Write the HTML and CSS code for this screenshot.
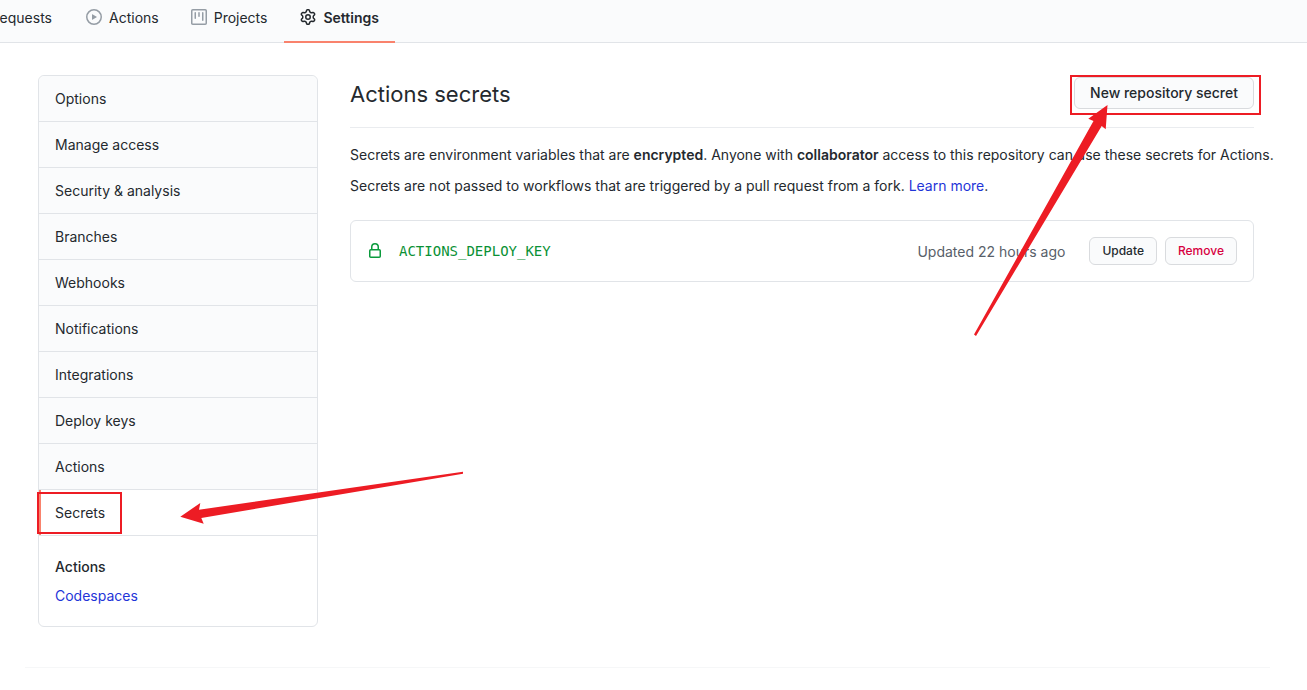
FILE: index.html
```html
<!DOCTYPE html>
<html lang="en">
<head>
<meta charset="utf-8">
<title>Actions secrets</title>
<link rel="stylesheet" href="styles.css">
</head>
<body>
<nav class="tabs" aria-label="Repository">
  <a class="tab tab-cut" href="#">requests</a>
  <a class="tab" href="#">
    <svg class="icon" viewBox="0 0 16 16" aria-hidden="true"><path fill-rule="evenodd" d="M1.5 8a6.5 6.5 0 1113 0 6.5 6.5 0 01-13 0zM8 0a8 8 0 100 16A8 8 0 008 0zM6.379 5.227A.25.25 0 006 5.442v5.117a.25.25 0 00.379.214l4.264-2.559a.25.25 0 000-.428L6.379 5.227z"/></svg>
    <span>Actions</span>
  </a>
  <a class="tab" href="#">
    <svg class="icon" viewBox="0 0 16 16" aria-hidden="true"><path fill-rule="evenodd" d="M1.75 0A1.75 1.75 0 000 1.75v12.5C0 15.216.784 16 1.75 16h12.5A1.75 1.75 0 0016 14.25V1.75A1.75 1.75 0 0014.25 0H1.75zM1.5 1.75a.25.25 0 01.25-.25h12.5a.25.25 0 01.25.25v12.5a.25.25 0 01-.25.25H1.75a.25.25 0 01-.25-.25V1.75zM11.75 3a.75.75 0 00-.75.75v7.5a.75.75 0 001.5 0v-7.5a.75.75 0 00-.75-.75zm-8.25.75a.75.75 0 011.5 0v5.5a.75.75 0 01-1.5 0v-5.5zM8 3a.75.75 0 00-.75.75v3.5a.75.75 0 001.5 0v-3.5A.75.75 0 008 3z"/></svg>
    <span>Projects</span>
  </a>
  <a class="tab tab-current" href="#" aria-current="page">
    <svg class="icon" viewBox="0 0 16 16" aria-hidden="true"><path fill-rule="evenodd" d="M7.429 1.525a6.593 6.593 0 011.142 0c.036.003.108.036.137.146l.289 1.105c.147.56.55.967.997 1.189.174.086.341.183.501.29.417.278.97.423 1.53.27l1.102-.303c.11-.03.175.016.195.046.219.31.41.641.573.989.014.031.022.11-.059.19l-.815.806c-.411.406-.562.957-.53 1.456a4.588 4.588 0 010 .582c-.032.499.119 1.05.53 1.456l.815.806c.08.08.073.159.059.19a6.494 6.494 0 01-.573.99c-.02.029-.086.074-.195.045l-1.103-.303c-.559-.153-1.112-.008-1.529.27-.16.107-.327.204-.5.29-.449.222-.851.628-.998 1.189l-.289 1.105c-.029.11-.101.143-.137.146a6.613 6.613 0 01-1.142 0c-.036-.003-.108-.037-.137-.146l-.289-1.105c-.147-.56-.55-.967-.997-1.189a4.502 4.502 0 01-.501-.29c-.417-.278-.97-.423-1.53-.27l-1.102.303c-.11.03-.175-.016-.195-.046a6.492 6.492 0 01-.573-.989c-.014-.031-.022-.11.059-.19l.815-.806c.411-.406.562-.957.53-1.456a4.587 4.587 0 010-.582c.032-.499-.119-1.05-.53-1.456l-.815-.806c-.08-.08-.073-.159-.059-.19a6.44 6.44 0 01.573-.99c.02-.029.086-.075.195-.045l1.103.303c.559.153 1.112.008 1.529-.27.16-.107.327-.204.5-.29.449-.222.851-.628.998-1.189l.289-1.105c.029-.11.101-.143.137-.146zM8 0c-.236 0-.47.01-.701.03-.743.065-1.29.615-1.458 1.261l-.29 1.106c-.017.066-.078.158-.211.224a5.994 5.994 0 00-.668.386c-.123.082-.233.09-.3.071L3.27 2.776c-.644-.177-1.392.02-1.82.63a7.977 7.977 0 00-.704 1.217c-.315.675-.111 1.422.363 1.891l.815.806c.05.048.098.147.088.294a6.084 6.084 0 000 .772c.01.147-.038.246-.088.294l-.815.806c-.474.469-.678 1.216-.363 1.891.2.428.436.835.704 1.218.428.609 1.176.806 1.82.63l1.103-.303c.066-.019.176-.011.299.071.213.143.436.272.668.386.133.066.194.158.212.224l.289 1.106c.169.646.715 1.196 1.458 1.26a8.094 8.094 0 001.402 0c.743-.064 1.29-.614 1.458-1.26l.29-1.106c.017-.066.078-.158.211-.224a5.98 5.98 0 00.668-.386c.123-.082.233-.09.3-.071l1.102.302c.644.177 1.392-.02 1.82-.63.268-.382.505-.789.704-1.217.315-.675.111-1.422-.364-1.891l-.814-.806c-.05-.048-.098-.147-.088-.294a6.1 6.1 0 000-.772c-.01-.147.039-.246.088-.294l.814-.806c.475-.469.679-1.216.364-1.891a7.992 7.992 0 00-.704-1.218c-.428-.609-1.176-.806-1.82-.63l-1.103.303c-.066.019-.176.011-.299-.071a5.991 5.991 0 00-.668-.386c-.133-.066-.194-.158-.212-.224L10.16 1.29C9.99.645 9.444.095 8.701.031A8.094 8.094 0 008 0zm1.5 8a1.5 1.5 0 11-3 0 1.5 1.5 0 013 0zM11 8a3 3 0 11-6 0 3 3 0 016 0z"/></svg>
    <span>Settings</span>
  </a>
</nav>
<div class="layout">
  <aside class="sidebar">
    <nav class="menu" aria-label="Settings">
      <a class="menu-item" href="#">Options</a>
      <a class="menu-item" href="#">Manage access</a>
      <a class="menu-item" href="#">Security &amp; analysis</a>
      <a class="menu-item" href="#">Branches</a>
      <a class="menu-item" href="#">Webhooks</a>
      <a class="menu-item" href="#">Notifications</a>
      <a class="menu-item" href="#">Integrations</a>
      <a class="menu-item" href="#">Deploy keys</a>
      <a class="menu-item" href="#">Actions</a>
      <a class="menu-item menu-item-current" href="#" aria-current="page">Secrets
        <span class="mark mark-menu"></span>
        <svg class="arrow arrow-menu" viewBox="0 0 284 54" aria-hidden="true"><path d="M0.3 46.7L20.3 33 19 39.7 283 1.7V3.7L21.3 48 23.7 53.7z"/></svg>
      </a>
      <div class="submenu">
        <a class="submenu-item submenu-current" href="#">Actions</a>
        <a class="submenu-item" href="#">Codespaces</a>
      </div>
    </nav>
  </aside>
  <main class="content">
    <header class="subhead">
      <h1 class="title">Actions secrets</h1>
      <div class="action">
        <button class="btn" type="button">New repository secret</button>
        <span class="mark mark-action"></span>
        <svg class="arrow arrow-action" viewBox="0 0 136 232" aria-hidden="true"><path d="M133.5 1L114.3 14.7 119.5 17 0 230.5 2 232 127.7 22 131.7 25.3z"/></svg>
      </div>
    </header>
    <p class="text">Secrets are environment variables that are <strong>encrypted</strong>. Anyone with <strong>collaborator</strong> access to this repository can use these secrets for Actions.</p>
    <p class="text">Secrets are not passed to workflows that are triggered by a pull request from a fork. <a class="link" href="#">Learn more</a>.</p>
    <section class="secret">
      <svg class="icon icon-lock" viewBox="0 0 16 16" aria-hidden="true"><path fill-rule="evenodd" d="M4 4v2h-.25A1.75 1.75 0 002 7.75v5.5c0 .966.784 1.75 1.75 1.75h8.5A1.75 1.75 0 0014 13.25v-5.5A1.75 1.75 0 0012.25 6H12V4a4 4 0 10-8 0zm6.5 2V4a2.5 2.5 0 10-5 0v2h5zM12 7.5h.25a.25.25 0 01.25.25v5.5a.25.25 0 01-.25.25h-8.5a.25.25 0 01-.25-.25v-5.5a.25.25 0 01.25-.25H12z"/></svg>
      <code class="secret-name">ACTIONS_DEPLOY_KEY</code>
      <span class="updated">Updated 22 hours ago</span>
      <div class="secret-actions">
        <button class="btn btn-small" type="button">Update</button>
        <button class="btn btn-small btn-danger" type="button">Remove</button>
      </div>
    </section>
  </main>
</div>
<footer class="footer"></footer>
</body>
</html>
```
FILE: styles.css
```css
* { box-sizing: border-box; }
body {
  margin: 0;
  background: #fff;
  color: #24292e;
  font: 14px/21px Inter, "Liberation Sans", sans-serif;
}
a { color: inherit; text-decoration: none; }
strong { font-weight: 600; }
.icon { width: 16px; height: 16px; flex: none; fill: #959da5; }

.tabs {
  display: flex;
  height: 43px;
  background: #fafbfc;
  border-bottom: 1px solid #e1e4e8;
}
.tab {
  display: flex;
  align-items: center;
  gap: 7px;
  height: 43px;
  padding: 0 16px 7px;
  border-bottom: 2px solid transparent;
}
.tab-cut {
  width: 70px;
  padding: 0 18px 7px 0;
  justify-content: flex-end;
  overflow: hidden;
}
.tab-current { margin-left: 1px; border-color: #f9826c; font-weight: 600; }
.tab-current .icon { fill: #24292e; }

.layout {
  display: grid;
  grid-template-columns: 280px minmax(0, 1fr);
  gap: 32px;
  padding: 32px 53px 0 38px;
}
.menu { border: 1px solid #e1e4e8; border-radius: 6px; }
.menu-item {
  display: block;
  padding: 12px 16px;
  background: #fafbfc;
  border-bottom: 1px solid #e1e4e8;
}
.menu-item:first-child { border-radius: 6px 6px 0 0; }
.menu-item-current {
  position: relative;
  background: #fff;
  box-shadow: inset 2px 0 #f9826c;
}
.submenu { display: grid; gap: 8px; padding: 20px 16px; }
.submenu-item { color: #1f35d8; }
.submenu-current { color: #24292e; font-weight: 500; }

.mark { position: absolute; border: 2px solid #ed1c24; }
.mark-menu { left: -2px; top: 2px; width: 85px; height: 42px; }
.mark-action { inset: -2px -7px -6px -4px; pointer-events: none; }
.arrow { position: absolute; fill: #ed1c24; pointer-events: none; z-index: 1; }
.arrow-menu { left: 141px; top: -20px; width: 284px; height: 54px; }
.arrow-action { right: 144px; top: 27px; width: 136px; height: 232px; }

.subhead {
  display: flex;
  justify-content: space-between;
  padding: 2px 0 18px;
  margin-bottom: 16px;
  border-bottom: 1px solid #eaecef;
}
.title { margin: 0; font-size: 22px; line-height: 34px; font-weight: 400; height: 32px; }
.action { position: relative; }
.btn {
  height: 32px;
  padding: 0 15px;
  border: 1px solid #d9dbde;
  border-radius: 6px;
  background: #fafbfc;
  color: #24292e;
  font: 500 14px/20px Inter, "Liberation Sans", sans-serif;
}
.btn-small { height: 28px; padding: 0 12px; font-size: 12px; }
.btn-danger { color: #d7003f; }
.text { margin: 0 -24px 10px 0; }
.link { color: #1f35d8; }
.secret {
  display: flex;
  align-items: center;
  margin-top: 24px;
  padding: 16px;
  border: 1px solid #e1e4e8;
  border-radius: 6px;
}
.icon-lock { fill: #0a9a3c; }
.secret-name {
  margin-left: 16px;
  color: #0a9135;
  font: 14px/21px "DejaVu Sans Mono", monospace;
}
.updated { margin-left: auto; color: #586069; }
.secret-actions { display: flex; gap: 8px; margin-left: 24px; }
.footer { margin: 40px 37px 0 25px; border-top: 1px solid #f6f7f8; }
```
